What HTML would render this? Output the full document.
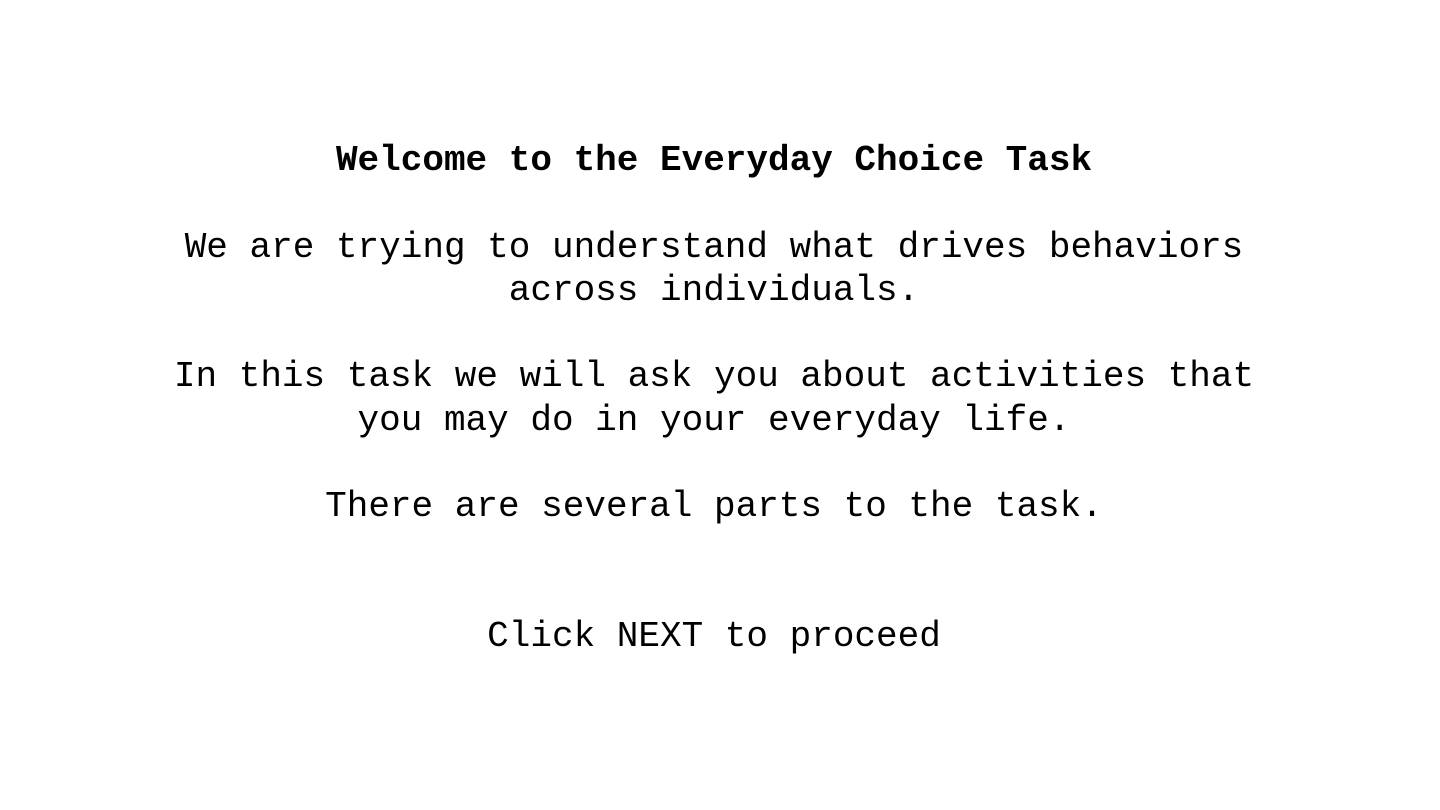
<!DOCTYPE html>
<html><head><meta charset="utf-8"><style>
html,body{margin:0;padding:0;background:#fff;width:1440px;height:810px;overflow:hidden}
.l{position:absolute;left:-6px;width:1440px;text-align:center;font-family:"Liberation Mono",monospace;font-size:36px;line-height:43px;color:#000;white-space:pre}
.b{font-weight:bold}
</style></head><body>
<div class="l b" style="top:139px">Welcome to the Everyday Choice Task</div>
<div class="l" style="top:226px">We are trying to understand what drives behaviors</div>
<div class="l" style="top:269px">across individuals.</div>
<div class="l" style="top:355px">In this task we will ask you about activities that</div>
<div class="l" style="top:399px">you may do in your everyday life.</div>
<div class="l" style="top:485px">There are several parts to the task.</div>
<div class="l" style="top:615px">Click NEXT to proceed</div>
</body></html>
